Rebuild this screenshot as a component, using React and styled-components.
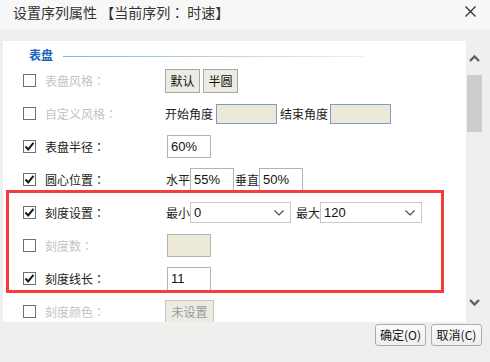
import React from "react";
import styled, { createGlobalStyle } from "styled-components";

const Global = createGlobalStyle`
  html, body { margin: 0; padding: 0; background: #f0efee; }
  body { font-family: "Noto Sans CJK SC", "Liberation Sans", sans-serif; font-size: 12px; }
  * { box-sizing: border-box; }
`;

const Dialog = styled.div`
  width: 490px;
  height: 362px;
  display: flex;
  flex-direction: column;
  background: #f0efee;
  overflow: hidden;
`;

const TitleBar = styled.div`
  height: 30px;
  flex: none;
  background: #f7f7f7;
  display: flex;
  align-items: center;
  justify-content: space-between;
  padding: 0 14px 0 13px;
  padding-bottom: 7px;
`;

const Title = styled.div`
  font-size: 14px;
  color: #333;
  line-height: 16px;
  white-space: pre;
`;

const Colon = styled.span`
  font-family: "Noto Sans CJK TC", "Noto Sans CJK SC", sans-serif;
`;

const Main = styled.div`
  flex: none;
  display: flex;
  padding: 11px 0 0 3px;
  height: 292px;
`;

const Panel = styled.div`
  position: relative;
  width: 463px;
  height: 281px;
  background: #fff;
  overflow: hidden;
  padding-top: 5px;
`;

const Scrollbar = styled.div`
  width: 24px;
  height: 281px;
  display: flex;
  flex-direction: column;
  align-items: flex-start;
  padding-left: 1px;
`;

const ArrowBox = styled.div`
  width: 15px;
  height: ${(p) => p.$h}px;
  display: flex;
  align-items: center;
  justify-content: center;
`;

const Thumb = styled.div`
  width: 15px;
  height: 57px;
  background: #cdcdcd;
`;

const ScrollSpace = styled.div`
  flex: 1;
`;

const SectionHeader = styled.div`
  height: 18px;
  display: flex;
  align-items: center;
  padding-left: 26px;
  gap: 10px;
`;

const SectionTitle = styled.span`
  color: #1565c0;
  font-weight: bold;
  font-size: 12px;
  line-height: 14px;
`;

const SectionLine = styled.div`
  width: 301px;
  height: 1px;
  margin-top: 2px;
  background: linear-gradient(to right, #86b3d6, #c9dfee 70%, #e6f2fa);
`;

const Row = styled.div`
  height: 33px;
  display: grid;
  grid-template-columns: 13px 111px 1fr;
  column-gap: 9px;
  align-items: center;
  padding-left: 20px;
`;

const Check = styled.div`
  width: 13px;
  height: 13px;
  border: 1px solid #707070;
  background: #fff;
  display: flex;
  align-items: center;
  justify-content: center;
`;

const Label = styled.span`
  color: ${(p) => (p.$disabled ? "#c4c4c4" : "#222")};
  font-size: 12px;
  line-height: 14px;
  white-space: nowrap;
`;

const Controls = styled.div`
  display: flex;
  align-items: center;
  gap: ${(p) => p.$gap || 0}px;
`;

const Text = styled.span`
  font-size: 12px;
  color: #222;
  line-height: 14px;
  white-space: nowrap;
  margin-left: ${(p) => p.$ml || 0}px;
`;

const SmallButton = styled.div`
  width: ${(p) => p.$w || 35}px;
  height: ${(p) => p.$h || 24}px;
  border: 1px solid ${(p) => (p.$disabled ? "#c8c6bc" : "#a8a8a8")};
  background: #ecebe3;
  color: ${(p) => (p.$disabled ? "#9a9a9a" : "#111")};
  display: flex;
  align-items: center;
  justify-content: center;
  font-size: 12px;
  line-height: 14px;
`;

const Field = styled.div`
  width: ${(p) => p.$w}px;
  height: ${(p) => p.$h}px;
  margin-left: ${(p) => p.$ml || 0}px;
  border: 1px solid ${(p) => p.$border || "#b4b4b4"};
  background: ${(p) => p.$bg || "#fff"};
  display: flex;
  align-items: center;
  padding-left: 3px;
  font-family: "Liberation Sans", "Noto Sans CJK SC", sans-serif;
  font-size: 13px;
  color: #111;
`;

const Select = styled.div`
  width: ${(p) => p.$w}px;
  height: 21px;
  border: 1px solid #c8c8c8;
  background: #fff;
  display: flex;
  align-items: center;
  justify-content: space-between;
  padding: 0 6px 0 3px;
  font-family: "Liberation Sans", "Noto Sans CJK SC", sans-serif;
  font-size: 13px;
  color: #111;
`;

const Highlight = styled.div`
  position: absolute;
  left: 3px;
  top: 149px;
  width: 438px;
  height: 103px;
  border: 3px solid #f43c3c;
  pointer-events: none;
`;

const Footer = styled.div`
  flex: 1;
  display: flex;
  justify-content: flex-end;
  align-items: flex-start;
  gap: 5px;
  padding: 2px 8px 0 0;
`;

const FooterButton = styled.div`
  width: 51px;
  height: 22px;
  border: 1px solid #a7adb8;
  border-radius: 3px;
  background: linear-gradient(#fbfbfb, #eeeeee);
  display: flex;
  align-items: center;
  justify-content: center;
  font-size: 12px;
  color: #111;
  line-height: 14px;
`;

const CheckMark = () => (
  <svg width="11" height="11" viewBox="0 0 11 11">
    <polyline points="1.5,5.5 4.2,8.4 9.5,1.8" fill="none" stroke="#1a1a1a" strokeWidth="2" />
  </svg>
);

const Chevron = ({ up }) => (
  <svg width="11" height="7" viewBox="0 0 11 7">
    <polyline
      points={up ? "1,6 5.5,1.5 10,6" : "1,1 5.5,5.5 10,1"}
      fill="none"
      stroke="#606060"
      strokeWidth="2.4"
    />
  </svg>
);

const SelectArrow = () => (
  <svg width="10" height="6" viewBox="0 0 10 6">
    <polyline points="0.5,0.5 5,5 9.5,0.5" fill="none" stroke="#444" strokeWidth="1.1" />
  </svg>
);

const CloseIcon = () => (
  <svg width="11" height="11" viewBox="0 0 11 11">
    <path d="M0.5 0.5 L10.5 10.5 M10.5 0.5 L0.5 10.5" stroke="#333" strokeWidth="1.3" />
  </svg>
);

const Box = ({ checked }) => <Check>{checked ? <CheckMark /> : null}</Check>;

const FieldLabel = ({ text, disabled }) => (
  <Label $disabled={disabled}>
    {text}
    <Colon>：</Colon>
  </Label>
);

export default function App() {
  return (
    <>
      <Global />
      <Dialog>
        <TitleBar>
          <Title>
            设置序列属性 【当前序列<Colon>：</Colon> 时速】
          </Title>
          <CloseIcon />
        </TitleBar>
        <Main>
          <Panel>
            <SectionHeader>
              <SectionTitle>表盘</SectionTitle>
              <SectionLine />
            </SectionHeader>
            <Row>
              <Box />
              <FieldLabel text="表盘风格" disabled />
              <Controls $gap={3}>
                <SmallButton>默认</SmallButton>
                <SmallButton>半圆</SmallButton>
              </Controls>
            </Row>
            <Row>
              <Box />
              <FieldLabel text="自定义风格" disabled />
              <Controls>
                <Text>开始角度</Text>
                <Field $w={61} $h={20} $bg="#ece9d8" $border="#7f9db9" $ml={3} />
                <Text $ml={3}>结束角度</Text>
                <Field $w={61} $h={20} $bg="#ece9d8" $border="#7f9db9" $ml={2} />
              </Controls>
            </Row>
            <Row>
              <Box checked />
              <FieldLabel text="表盘半径" />
              <Controls>
                <Field $w={44} $h={23} $ml={2}>60%</Field>
              </Controls>
            </Row>
            <Row>
              <Box checked />
              <FieldLabel text="圆心位置" />
              <Controls>
                <Text $ml={1}>水平</Text>
                <Field $w={44} $h={24}>55%</Field>
                <Text $ml={1}>垂直</Text>
                <Field $w={44} $h={24}>50%</Field>
              </Controls>
            </Row>
            <Row>
              <Box checked />
              <FieldLabel text="刻度设置" />
              <Controls>
                <Text $ml={1}>最小</Text>
                <Select $w={101}>
                  <span>0</span>
                  <SelectArrow />
                </Select>
                <Text $ml={5}>最大</Text>
                <Select $w={102}>
                  <span>120</span>
                  <SelectArrow />
                </Select>
              </Controls>
            </Row>
            <Row>
              <Box />
              <FieldLabel text="刻度数" disabled />
              <Controls>
                <Field $w={44} $h={23} $bg="#ece9d8" $ml={2} />
              </Controls>
            </Row>
            <Row>
              <Box checked />
              <FieldLabel text="刻度线长" />
              <Controls>
                <Field $w={44} $h={24} $ml={2}>11</Field>
              </Controls>
            </Row>
            <Row>
              <Box />
              <FieldLabel text="刻度颜色" disabled />
              <Controls>
                <SmallButton $w={49} $h={23} $disabled>
                  未设置
                </SmallButton>
              </Controls>
            </Row>
            <Highlight />
          </Panel>
          <Scrollbar>
            <ArrowBox $h={34}>
              <Chevron up />
            </ArrowBox>
            <Thumb />
            <ScrollSpace />
            <ArrowBox $h={40}>
              <Chevron />
            </ArrowBox>
          </Scrollbar>
        </Main>
        <Footer>
          <FooterButton>确定(O)</FooterButton>
          <FooterButton>取消(C)</FooterButton>
        </Footer>
      </Dialog>
    </>
  );
}
